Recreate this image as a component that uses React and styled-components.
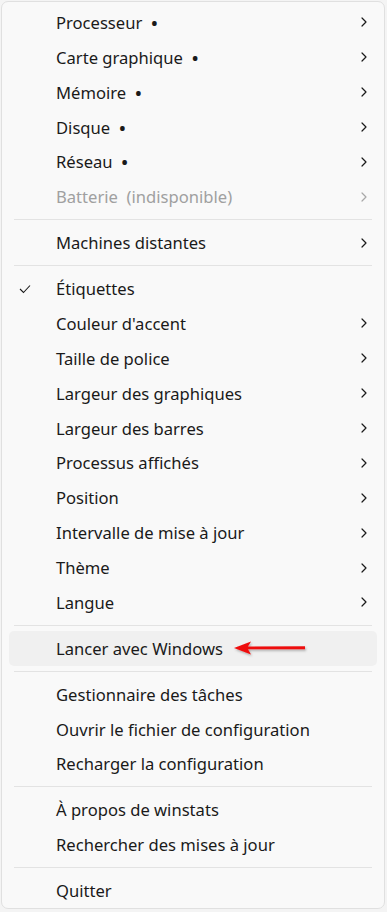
import React from "react";
import styled, { createGlobalStyle } from "styled-components";

const Global = createGlobalStyle`
  html, body { margin: 0; padding: 0; background: #f4f4f4; }
  body { font-family: "Noto Sans", "Open Sans", sans-serif; }
`;

const Menu = styled.div`
  margin: 1px 2px 0 1px;
  height: 908px;
  box-sizing: border-box;
  background: #f9f9f9;
  border: 1px solid #e0e0e0;
  border-radius: 7px;
  padding: 3px 7px 0 7px;
  display: flex;
  flex-direction: column;
`;

const Row = styled.div`
  position: relative;
  height: 35px;
  display: flex;
  align-items: center;
  border-radius: 5px;
  background: ${(p) => (p.$hover ? "#f0f0f0" : "transparent")};
  color: ${(p) => (p.$disabled ? "#a0a0a0" : "#1a1a1a")};
  font-size: 16.6px;
`;

const CheckCol = styled.div`
  width: 47px;
  display: flex;
  justify-content: flex-start;
  padding-left: 10px;
  box-sizing: border-box;
`;

const Label = styled.span`
  flex: 1;
  white-space: pre;
`;

const Dot = styled.span`
  font-weight: bold;
  margin-left: 9px;
`;

const Chevron = styled.div`
  width: 16px;
  display: flex;
  justify-content: flex-start;
`;

const Separator = styled.div`
  height: 1px;
  background: #e3e3e3;
  margin: 5px 5px 5px 5px;
`;

const Arrow = styled.svg`
  position: absolute;
  left: 218px;
  top: 7px;
  overflow: visible;
`;

const ChevronIcon = ({ disabled }) => (
  <svg width="6" height="10" viewBox="0 0 6 10">
    <path
      d="M1 1 L5 5 L1 9"
      fill="none"
      stroke={disabled ? "#a8a8a8" : "#1a1a1a"}
      strokeWidth="1.2"
      strokeLinecap="round"
      strokeLinejoin="round"
    />
  </svg>
);

const CheckIcon = () => (
  <svg width="12" height="10" viewBox="0 0 12 10">
    <path d="M1 5 L4.5 8.5 L11 1.5" fill="none" stroke="#1a1a1a" strokeWidth="1.1" />
  </svg>
);

const Item = ({ label, dot, sub, disabled, checked, hover, children }) => (
  <Row $disabled={disabled} $hover={hover}>
    <CheckCol>{checked && <CheckIcon />}</CheckCol>
    <Label>
      {label}
      {dot && <Dot>•</Dot>}
    </Label>
    <Chevron>{sub && <ChevronIcon disabled={disabled} />}</Chevron>
    {children}
  </Row>
);

export default function App() {
  return (
    <>
      <Global />
      <Menu>
        <Item label="Processeur" dot sub />
        <Item label="Carte graphique" dot sub />
        <Item label="Mémoire" dot sub />
        <Item label="Disque" dot sub />
        <Item label="Réseau" dot sub />
        <Item label="Batterie  (indisponible)" sub disabled />
        <Separator />
        <Item label="Machines distantes" sub />
        <Separator />
        <Item label="Étiquettes" checked />
        <Item label="Couleur d'accent" sub />
        <Item label="Taille de police" sub />
        <Item label="Largeur des graphiques" sub />
        <Item label="Largeur des barres" sub />
        <Item label="Processus affichés" sub />
        <Item label="Position" sub />
        <Item label="Intervalle de mise à jour" sub />
        <Item label="Thème" sub />
        <Item label="Langue" sub />
        <Separator />
        <Item label="Lancer avec Windows" hover>
          <Arrow width="80" height="20" viewBox="0 0 80 20">
            <defs>
              <filter id="sh" x="-20%" y="-50%" width="140%" height="200%">
                <feDropShadow dx="1" dy="1.5" stdDeviation="1.2" floodColor="#000" floodOpacity="0.3" />
              </filter>
            </defs>
            <g filter="url(#sh)">
              <path d="M7 10 L24 3.5 L21 8.5 L78 8.3 L78 11.3 L21 11.3 L24 16.5 Z" fill="#ee1111" />
            </g>
          </Arrow>
        </Item>
        <Separator />
        <Item label="Gestionnaire des tâches" />
        <Item label="Ouvrir le fichier de configuration" />
        <Item label="Recharger la configuration" />
        <Separator />
        <Item label="À propos de winstats" />
        <Item label="Rechercher des mises à jour" />
        <Separator />
        <Item label="Quitter" />
      </Menu>
    </>
  );
}
